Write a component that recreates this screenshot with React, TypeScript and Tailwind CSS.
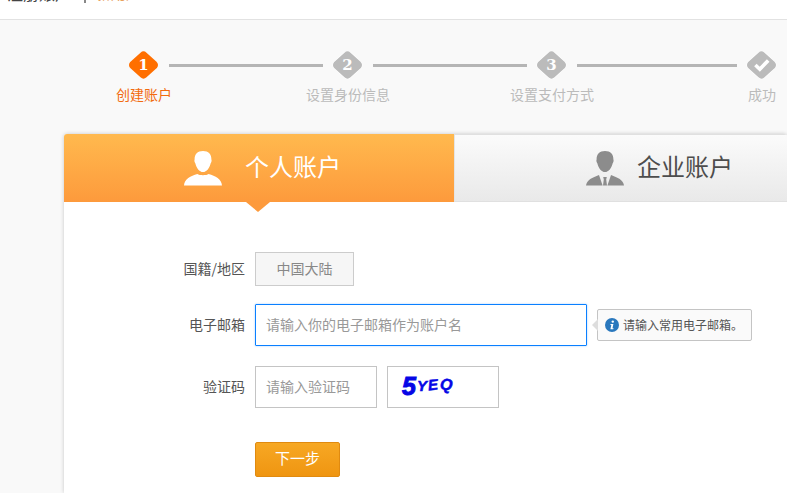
const cjk = "font-['Microsoft_YaHei','Noto_Sans_CJK_SC','Liberation_Sans',sans-serif]";

const steps = [
  { mark: "1", label: "创建账户", active: true },
  { mark: "2", label: "设置身份信息", active: false, lineWidth: "w-[154px]" },
  { mark: "3", label: "设置支付方式", active: false, lineWidth: "w-[154px]" },
  { mark: "check", label: "成功", active: false, lineWidth: "w-[160px]" },
];

const DIAMOND = "M15.5 6 L25.5 15 L15.5 24 L5.5 15 Z";

const Diamond = ({ mark, active }: { mark: string; active: boolean }) => (
  <svg width="32" height="30" viewBox="0 0 32 30">
    {!active && <path d={DIAMOND} fill="#fff" stroke="#fff" strokeWidth="10" strokeLinejoin="round" />}
    <path
      d={DIAMOND}
      fill={active ? "#ff6f00" : "#bbbbbb"}
      stroke={active ? "#ff6f00" : "#bbbbbb"}
      strokeWidth="9"
      strokeLinejoin="round"
    />
    {mark === "check" ? (
      <path d="M9.4 15 L13.8 19.2 L22.2 10.4" fill="none" stroke="#fff" strokeWidth="3.6" />
    ) : (
      <text
        x="15.5"
        y="20"
        textAnchor="middle"
        fill="#fff"
        fontSize="15"
        fontWeight="700"
        fontFamily="'DejaVu Serif', serif"
      >
        {mark}
      </text>
    )}
  </svg>
);

const Stepper = () => (
  <div className="flex h-[114px] items-start pl-[119px] pt-[30px]">
    {steps.map((step) => (
      <div key={step.mark} className="flex items-start">
        {step.lineWidth && <div className={`mt-[14px] h-[3px] bg-[#b5b5b5] ${step.lineWidth}`} />}
        <div className="flex w-[50px] flex-col items-center">
          <Diamond mark={step.mark} active={step.active} />
          <span
            className={`mt-[4px] whitespace-nowrap text-[14px] leading-[20px] ${
              step.active ? "text-[#f26b0f]" : "text-[#bbbbbb]"
            }`}
          >
            {step.label}
          </span>
        </div>
      </div>
    ))}
  </div>
);

const PersonIcon = () => (
  <svg width="38" height="35" viewBox="0 0 38 35" fill="#fff">
    <path d="M19 0 C24.5 0 27.6 3.4 27.4 8.6 C27.8 9.2 27.7 11.4 26.6 12.4 C25.8 16.6 22.6 21 19 21 C15.4 21 12.2 16.6 11.4 12.4 C10.3 11.4 10.2 9.2 10.6 8.6 C10.4 3.4 13.5 0 19 0 Z" />
    <path d="M0 34.6 C0.4 28 6.6 25 13.4 23 C15.4 24.6 22.6 24.6 24.6 23 C31.4 25 37.6 28 38 34.6 Z" />
  </svg>
);

const BusinessIcon = () => (
  <svg width="38" height="35" viewBox="0 0 38 35" fill="#8c8c8c">
    <path d="M19 0 C24.5 0 27.6 3.4 27.4 8.6 C27.8 9.2 27.7 11.4 26.6 12.4 C25.8 16.6 22.6 21 19 21 C15.4 21 12.2 16.6 11.4 12.4 C10.3 11.4 10.2 9.2 10.6 8.6 C10.4 3.4 13.5 0 19 0 Z" />
    <path d="M0 34.6 C0.4 29 6.6 26.4 13 24 L16.6 34.6 Z" />
    <path d="M38 34.6 C37.6 29 31.4 26.4 25 24 L21.4 34.6 Z" />
    <path d="M17.2 26 L20.8 26 L20.2 28.4 L21 34.6 L17 34.6 L17.8 28.4 Z" />
  </svg>
);

const InfoIcon = () => (
  <svg width="14" height="14" viewBox="0 0 14 14" className="shrink-0">
    <circle cx="7" cy="7" r="7" fill="#2a78bd" />
    <circle cx="7.8" cy="3.6" r="1.2" fill="#fff" />
    <path d="M5.6 6 L8.4 6 L7.5 10.2 L8.6 10.2 L8.3 11.2 L5.4 11.2 L6.3 7 L5.4 7 Z" fill="#fff" />
  </svg>
);

const Captcha = () => (
  <div className="ml-[10px] flex h-[42px] w-[112px] items-center border border-[#c4c4c4] bg-white pb-[2px] pl-[14px] font-['Liberation_Sans',sans-serif] font-bold italic text-[#0606e6]">
    <span className="text-[25px] leading-none [-webkit-text-stroke:1px_#0606e6]">5</span>
    <span className="mb-[1px] ml-[1px] text-[15px] leading-none [-webkit-text-stroke:0.5px_#0606e6]">Y</span>
    <span className="mb-[3px] ml-[1px] -rotate-6 text-[15px] leading-none [-webkit-text-stroke:0.5px_#0606e6]">E</span>
    <span className="mb-[2px] ml-[2px] rotate-6 text-[16px] leading-none [-webkit-text-stroke:0.5px_#0606e6]">Q</span>
  </div>
);

const FormRow = ({ label, children, className }: { label: string; children: React.ReactNode; className: string }) => (
  <div className={`flex items-center ${className}`}>
    <label className="w-[181px] pb-[2px] text-right text-[14px] text-[#555555]">{label}</label>
    <div className="ml-[10px] flex items-center">{children}</div>
  </div>
);

export default function App() {
  return (
    <div className={`flex h-screen w-full flex-col overflow-hidden bg-[#f9f9f9] ${cjk}`}>
      {/* header is cut off by the top of the window */}
      <div className="h-[20px] overflow-hidden border-b border-[#e2e2e2] bg-white">
        <div className="-mt-[17px] flex items-center pl-[7px] text-[16px] leading-[20px] text-[#444444]">
          <span>注册账户</span>
          <span className="ml-[13px] h-[20px] w-[2px] bg-[#888888]" />
          <span className="ml-[10px] text-[15px] text-[#e8a060]">新用户</span>
        </div>
      </div>

      <Stepper />

      <div className="ml-[64px] flex-1 overflow-hidden rounded-t-[3px] bg-white shadow-[0_0_4px_rgba(0,0,0,0.2)]">
        <div className="flex h-[68px] w-[723px]">
          <div className="relative flex w-[390px] shrink-0 items-center bg-gradient-to-b from-[#ffb94e] to-[#fd9a3c] pl-[120px]">
            <PersonIcon />
            <span className="ml-[23px] pb-[4px] text-[24px] text-white">个人账户</span>
            <span className="absolute left-[182px] top-full h-0 w-0 border-x-[12px] border-t-[10px] border-x-transparent border-t-[#fd9a3c]" />
          </div>
          <div className="flex flex-1 items-center border-b border-t border-[#e0e0e0] bg-gradient-to-b from-[#fbfbfb] to-[#e9e9e9] pl-[132px] shadow-[inset_1px_0_0_#e4e4e4]">
            <BusinessIcon />
            <span className="ml-[13px] pb-[4px] text-[24px] text-[#4d4d4d]">企业账户</span>
          </div>
        </div>

        <div className="pt-[50px]">
          <FormRow label="国籍/地区" className="h-[34px]">
            <div className="flex h-[34px] w-[99px] items-center justify-center border border-[#cccccc] bg-[#f6f6f6] pb-[2px] text-[14px] text-[#888888]">
              中国大陆
            </div>
          </FormRow>

          <FormRow label="电子邮箱" className="mt-[18px] h-[42px]">
            <input
              placeholder="请输入你的电子邮箱作为账户名"
              className="h-[42px] w-[332px] rounded-[1px] border border-[#0a80ff] pb-[2px] pl-[10px] text-[14px] shadow-[0_0_2px_rgba(10,128,255,0.4)] outline-none placeholder:text-[#999999]"
            />
            <div className="relative ml-[10px] flex h-[32px] w-[155px] items-center rounded-[2px] border border-[#c4c4c4] bg-[#fafafa] pl-[7px] text-[12px] text-[#555555]">
              <span className="absolute -left-[6px] top-[9px] h-0 w-0 border-y-[6px] border-r-[6px] border-y-transparent border-r-[#dddddd]" />
              <InfoIcon />
              <span className="ml-[4px] whitespace-nowrap">请输入常用电子邮箱。</span>
            </div>
          </FormRow>

          <FormRow label="验证码" className="mt-[20px] h-[42px]">
            <input
              placeholder="请输入验证码"
              className="h-[42px] w-[122px] border border-[#c4c4c4] pb-[2px] pl-[10px] text-[14px] outline-none placeholder:text-[#999999]"
            />
            <Captcha />
          </FormRow>

          <div className="ml-[191px] mt-[34px]">
            <button className="h-[35px] w-[85px] rounded-[2px] border border-[#e08a10] bg-gradient-to-b from-[#f7a823] to-[#ef9510] pb-[2px] text-[15px] text-white">
              下一步
            </button>
          </div>
        </div>
      </div>
    </div>
  );
}
